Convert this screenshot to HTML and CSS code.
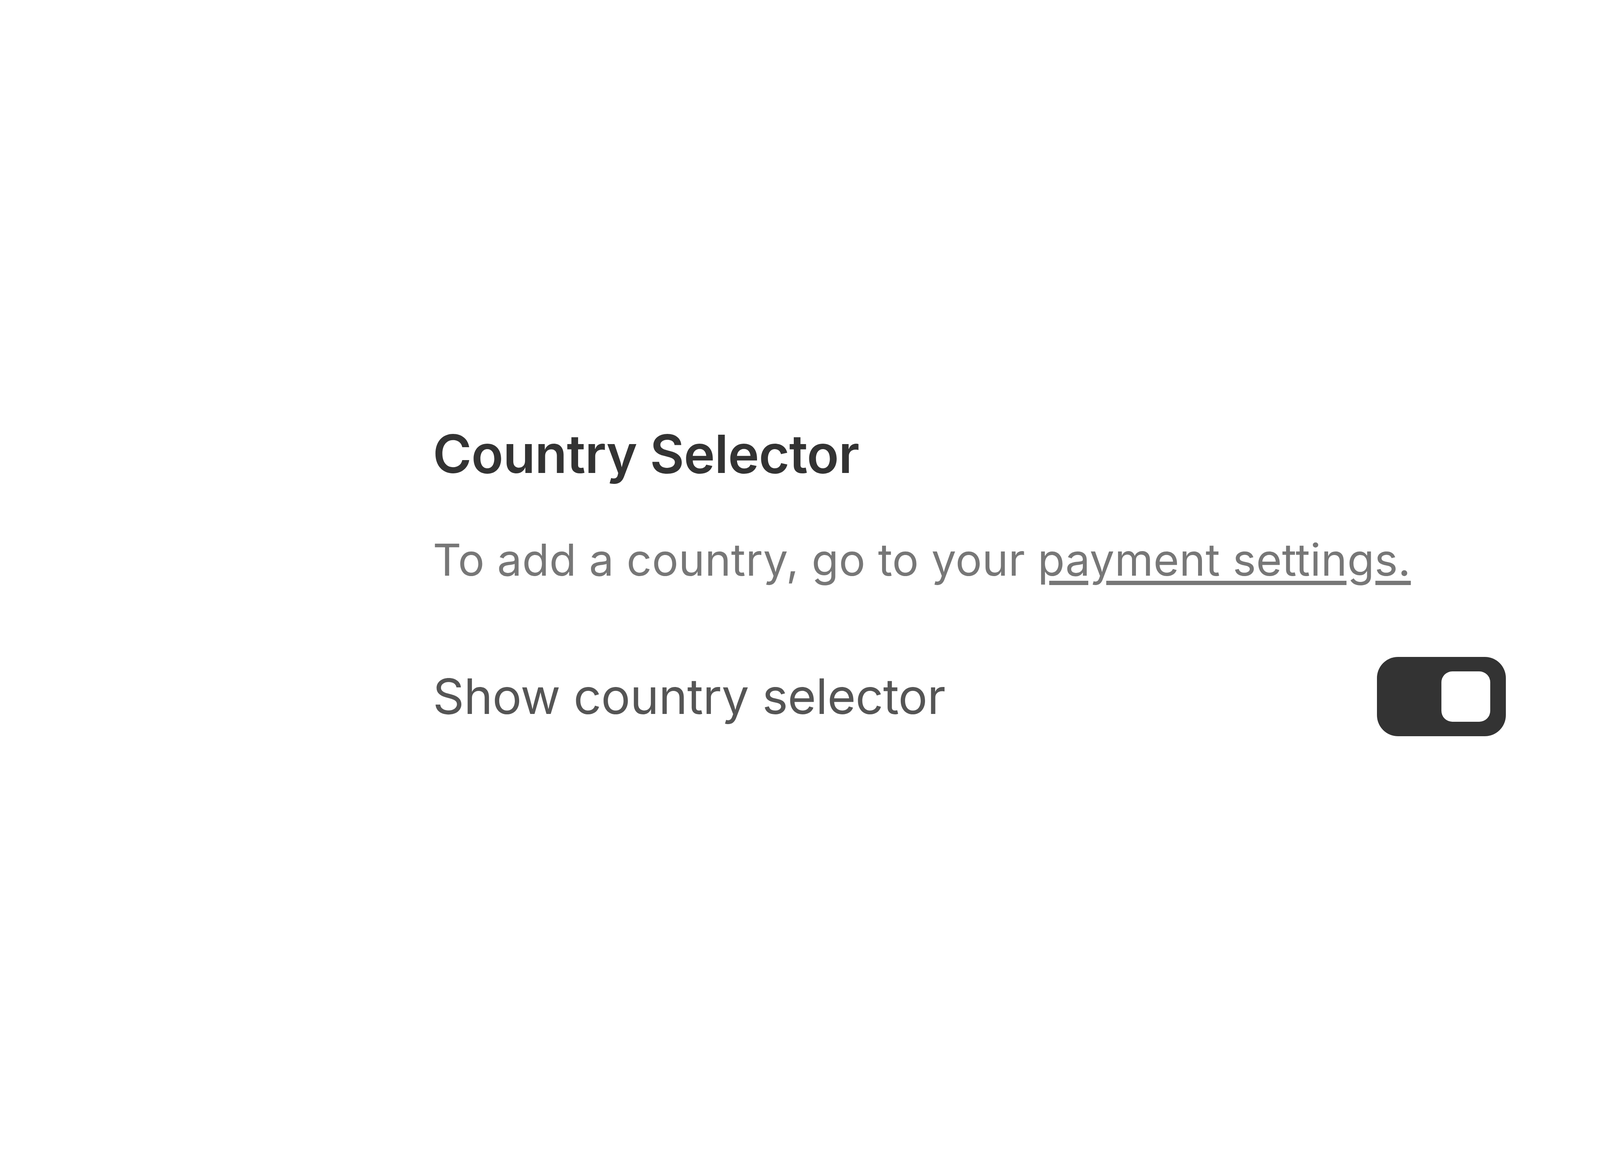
FILE: index.html
```html
<!DOCTYPE html>
<html lang="en">
<head>
  <meta charset="UTF-8">
  <meta name="viewport" content="width=device-width, initial-scale=1.0">
  <title>Country Selector</title>
  <link rel="stylesheet" href="styles.css">
</head>
<body>
  <!-- Country selector settings -->
  <div class="panel">
    <h2 class="panel-title">Country Selector</h2>
    <p class="panel-note">To add a country, go to your <a href="#" class="note-link">payment settings.</a></p>

    <div class="setting-row">
      <span class="setting-label">Show country selector</span>
      <label class="toggle">
        <input type="checkbox" checked>
        <span class="toggle-track"><span class="toggle-knob"></span></span>
      </label>
    </div>
  </div>
</body>
</html>
```

FILE: styles.css
```css
body {
  margin: 0;
  font-family: Inter, "Noto Sans", Arial, sans-serif;
  background: #fff;
}
.panel {
  width: 2747px;
  padding: 1081px 0 0 1108px;
}
.panel-title {
  margin: 0;
  font-size: 135px;
  line-height: 1.2;
  font-weight: 600;
  letter-spacing: -1px;
  color: #333;
}
.panel-note {
  margin: 123px 0 0;
  font-size: 113px;
  line-height: 1.2;
  letter-spacing: 0.4px;
  color: #777;
}
.note-link {
  color: #777;
  text-decoration: underline;
  text-decoration-thickness: 11px;
  text-underline-offset: 13px;
}
.setting-row {
  margin-top: 180px;
  display: flex;
  align-items: center;
  justify-content: space-between;
}
.setting-label {
  font-size: 125px;
  line-height: 1.2;
  letter-spacing: -0.8px;
  color: #555;
}
.toggle input {
  display: none;
}
.toggle-track {
  box-sizing: border-box;
  width: 330px;
  height: 203px;
  padding: 37px 40px;
  border-radius: 54px;
  background: #333;
  display: flex;
  justify-content: flex-end;
  align-items: center;
}
.toggle-knob {
  width: 125px;
  height: 129px;
  border-radius: 28px;
  background: #fff;
}
```
